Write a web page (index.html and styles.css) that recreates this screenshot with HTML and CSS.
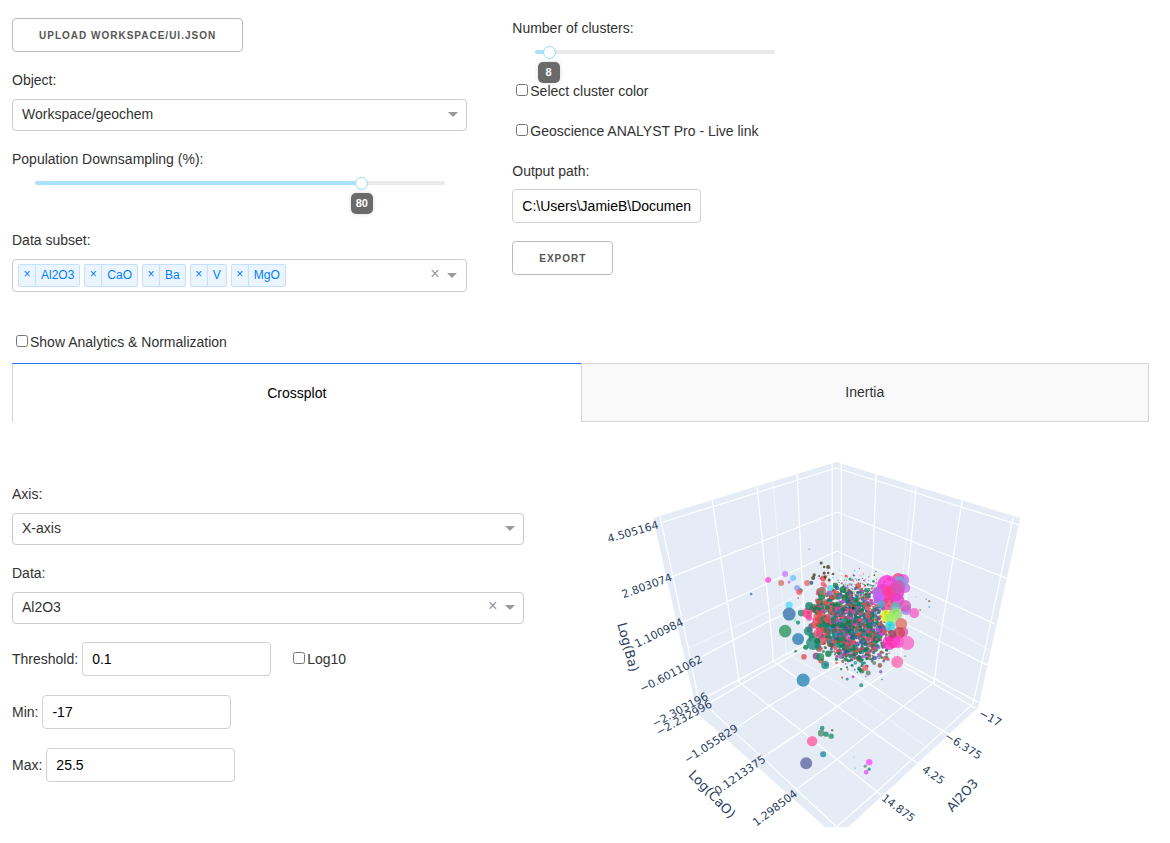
FILE: index.html
```html
<!DOCTYPE html>
<html lang="en">
<head>
<meta charset="utf-8">
<meta name="viewport" content="width=device-width, initial-scale=1">
<title>Scatter plot and clustering</title>
<link rel="stylesheet" href="styles.css">
</head>
<body>
<main class="page">
  <section class="setup">
    <div class="setup-left">
      <button class="button" type="button">Upload Workspace/ui.json</button>

      <div class="field">
        <label class="label" for="object">Object:</label>
        <div class="dropdown">
          <select id="object"><option>Workspace/geochem</option></select>
        </div>
      </div>

      <div class="field">
        <label class="label label-tight" for="downsampling">Population Downsampling (%):</label>
        <div class="slider slider-tall">
          <div class="slider-body">
            <span class="rail"></span>
            <span class="fill" style="width: 80%"></span>
            <input id="downsampling" type="range" min="0" max="100" value="80">
            <output class="tip" for="downsampling" style="left: 80%">80</output>
          </div>
        </div>
      </div>

      <div class="field-flush">
        <label class="label" for="subset">Data subset:</label>
        <div class="dropdown dropdown-multi">
          <span class="tag"><button type="button" aria-label="Remove Al2O3">×</button><span>Al2O3</span></span>
          <span class="tag"><button type="button" aria-label="Remove CaO">×</button><span>CaO</span></span>
          <span class="tag"><button type="button" aria-label="Remove Ba">×</button><span>Ba</span></span>
          <span class="tag"><button type="button" aria-label="Remove V">×</button><span>V</span></span>
          <span class="tag"><button type="button" aria-label="Remove MgO">×</button><span>MgO</span></span>
          <input id="subset" class="tag-input" type="text">
          <button class="clear" type="button" aria-label="Clear data subset">×</button>
        </div>
      </div>
    </div>

    <div class="setup-right">
      <label class="label label-tight" for="clusters">Number of clusters:</label>
      <div class="slider slider-short">
        <div class="slider-body">
          <span class="rail"></span>
          <span class="fill" style="width: 6%"></span>
          <input id="clusters" type="range" min="2" max="100" value="8">
          <output class="tip" for="clusters" style="left: 6%">8</output>
        </div>
      </div>
      <div class="options">
        <label class="check"><input type="checkbox">Select cluster color</label>
        <label class="check"><input type="checkbox">Geoscience ANALYST Pro - Live link</label>
        <div class="output-path">
          <label class="label" for="path">Output path:</label>
          <input id="path" class="text-input" type="text" value="C:\Users\JamieB\Documents\GIT">
        </div>
      </div>
      <button class="button" type="button">Export</button>
    </div>
  </section>

  <label class="check check-analytics"><input type="checkbox">Show Analytics &amp; Normalization</label>

  <div class="tabs" role="tablist">
    <button class="tab tab-selected" type="button" role="tab" aria-selected="true">Crossplot</button>
    <button class="tab" type="button" role="tab" aria-selected="false">Inertia</button>
  </div>

  <section class="crossplot">
    <div class="axis-form">
      <div class="field">
        <label class="label" for="axis">Axis:</label>
        <div class="dropdown">
          <select id="axis"><option>X-axis</option></select>
        </div>
      </div>
      <div class="field">
        <label class="label" for="data">Data:</label>
        <div class="dropdown">
          <select id="data"><option>Al2O3</option></select>
          <button class="clear" type="button" aria-label="Clear data">×</button>
        </div>
      </div>
      <div class="numbers">
        <div class="number-row">
          <label for="threshold">Threshold:</label>
          <input id="threshold" class="text-input" type="text" value="0.1">
          <label class="check check-log"><input type="checkbox">Log10</label>
        </div>
        <div class="number-row">
          <label for="min">Min:</label>
          <input id="min" class="text-input" type="text" value="-17">
        </div>
        <div class="number-row">
          <label for="max">Max:</label>
          <input id="max" class="text-input" type="text" value="25.5">
        </div>
      </div>
    </div>

    <svg class="plot" viewBox="524 440 625 387" role="img" aria-label="3D crossplot of Al2O3, Log(CaO) and Log(Ba)">
      <path class="walls" d="M653 518 836 462 1020 518 978 707 848 827H825L697 713Z"/>
      <g class="grid-faint">
        <path d="M773 482 785 637 786 653 847 688 930 750"/>
        <path d="M912 485 903 573 895 660 830 712 767 753"/>
        <path d="M688 648 767 612 837 572 918 612 990 650"/>
      </g>
      <g class="grid">
        <path d="M660 523 836 468 1019 525"/>
        <path d="M671 577 837 512 1006 578"/>
        <path d="M683 622 837 551 995 624"/>
        <path d="M693 661 767 622 837 590 987 665"/>
        <path d="M704 698 738 680 837 627 978 702"/>
        <path d="M660 517 688 647 698 698 767 762 836 826"/>
        <path d="M712 500 733 640 739 682 802 731 881 795"/>
        <path d="M757 487 772 643 773 661 837 706 872 731 917 763"/>
        <path d="M797 474 803 603 805 645 868 683 903 706 950 735"/>
        <path d="M832 463V628L910 670 975 708"/>
        <path d="M841 463V628L743 683 706 705"/>
        <path d="M876 474 872 577 870 645 820 675 770 705 737 727"/>
        <path d="M916 487 908 573 900 663 837 706 802 731 763 757"/>
        <path d="M962 500 953 557 946 602 939 642 934 682 903 706 872 731 837 759 795 790"/>
        <path d="M1013 517 985 648 973 703 943 731 912 759 877 791 837 826"/>
      </g>
      <g id="points" class="points"></g>
      <g class="ticks">
        <text transform="translate(633 532) rotate(-16)">4.505164</text>
        <text transform="translate(647 586) rotate(-20)">2.803074</text>
        <text transform="translate(659 633) rotate(-26)">1.100984</text>
        <text transform="translate(671 674) rotate(-27)">−0.6011062</text>
        <text transform="translate(680 710) rotate(-28)">−2.303196</text>
        <text transform="translate(684 718) rotate(-29)">−2.232996</text>
        <text transform="translate(711 744) rotate(-33)">−1.055829</text>
        <text transform="translate(740 775) rotate(-35)">0.1213375</text>
        <text transform="translate(775 808) rotate(-37)">1.298504</text>
        <text transform="translate(990 718) rotate(28)">−17</text>
        <text transform="translate(963 746) rotate(32)">−6.375</text>
        <text transform="translate(933 775) rotate(35)">4.25</text>
        <text transform="translate(898 808) rotate(37)">14.875</text>
      </g>
      <g class="axis-titles">
        <text transform="translate(628 647) rotate(75)">Log(Ba)</text>
        <text transform="translate(712 794) rotate(46)">Log(CaO)</text>
        <text transform="translate(962 795) rotate(-47)">Al2O3</text>
      </g>
    </svg>
  </section>
</main>
<script src="scatter.js"></script>
</body>
</html>
```

FILE: styles.css
```css
* {
  box-sizing: border-box;
}

body {
  margin: 0;
  background: #fff;
  color: #323232;
  font: 14px/24px "Liberation Sans", Arial, sans-serif;
}

button,
input,
select {
  font: inherit;
  color: inherit;
}

.page {
  padding: 16px 21px 16px 12px;
}

.setup {
  display: grid;
  grid-template-columns: 40% 25%;
  column-gap: 4%;
}

.setup-left {
  padding-top: 2px;
}

.button {
  height: 34px;
  padding: 1px 26px 0;
  border: 1px solid #bbb;
  border-radius: 4px;
  background: #fff;
  color: #555;
  font-size: 10px;
  font-weight: 700;
  letter-spacing: 1px;
  text-transform: uppercase;
  display: block;
}

.field {
  margin-top: 16px;
}

.label {
  display: block;
  margin-bottom: 7px;
}

.label-tight {
  margin-bottom: 0;
}

/* Dropdowns */
.dropdown {
  position: relative;
}

.dropdown::after {
  content: "";
  position: absolute;
  top: 13px;
  right: 9px;
  border: 5px solid transparent;
  border-top-color: #999;
  border-bottom-width: 0;
  pointer-events: none;
}

.dropdown select {
  display: block;
  width: 100%;
  height: 32px;
  padding: 0 52px 2px 9px;
  border: 1px solid #ccc;
  border-radius: 4px;
  background: #fff;
  color: #333;
  appearance: none;
}

.clear {
  position: absolute;
  top: 4px;
  right: 24px;
  width: 14px;
  padding: 0;
  border: 0;
  background: none;
  color: #999;
  font-size: 16px;
  line-height: 20px;
}

.dropdown-multi {
  display: flex;
  flex-wrap: wrap;
  gap: 4px;
  height: 33px;
  padding: 4px 52px 4px 5px;
  border: 1px solid #ccc;
  border-radius: 4px;
}

.tag {
  display: flex;
  height: 23px;
  border: 1px solid #c2e0ff;
  border-radius: 2px;
  background: #ebf5ff;
  color: #007eff;
  font-size: 12px;
  line-height: 20px;
}

.tag button {
  width: 17px;
  padding: 0 0 3px;
  border: 0;
  border-right: 1px solid #c2e0ff;
  background: none;
  line-height: 18px;
}

.tag span {
  padding: 0 5px;
}

.tag-input {
  flex: 1;
  width: 20px;
  min-width: 0;
  height: 23px;
  padding: 0;
  border: 0;
  outline: 0;
  background: none;
}

/* Sliders */
.slider {
  padding: 5px 22px 0 23px;
}

.slider-tall {
  height: 57px;
}

.slider-short {
  height: 39px;
}

.slider-body {
  position: relative;
  display: grid;
  align-items: center;
  height: 14px;
}

.rail,
.fill,
.slider-body input {
  grid-area: 1 / 1;
}

.rail,
.fill {
  height: 4px;
  border-radius: 6px;
  background: #e9e9e9;
}

.fill {
  background: #abe2fb;
}

.slider-body input {
  width: calc(100% + 12px);
  height: 14px;
  margin: 0 -6px 0 -7px;
  background: none;
  appearance: none;
  z-index: 1;
}

.slider-body input::-webkit-slider-thumb {
  width: 13px;
  height: 13px;
  border: 1px solid #96dbfa;
  border-radius: 50%;
  background: #fff;
  appearance: none;
}

.tip {
  position: absolute;
  top: 17px;
  min-width: 22px;
  height: 21px;
  margin-left: -1px;
  border-radius: 5px;
  background: #6a6a6a;
  box-shadow: 0 0 4px #d9d9d9;
  color: #fff;
  font-size: 11px;
  font-weight: 700;
  line-height: 21px;
  text-align: center;
  transform: translateX(-50%);
}

/* Check boxes and text boxes */
.check {
  display: flex;
  align-items: center;
}

.check input {
  width: 12px;
  height: 12px;
  margin: 0 2px 2px 4px;
}

.check-analytics {
  margin-top: 38px;
}

.options {
  display: grid;
  gap: 16px;
  margin-bottom: 18px;
}

.output-path .label {
  margin-bottom: 6px;
}

.text-input {
  display: block;
  width: 189px;
  height: 34px;
  padding: 6px 9px;
  border: 1px solid #d1d1d1;
  border-radius: 4px;
  background: #fff;
  color: #000;
}

/* Tabs */
.tabs {
  display: grid;
  grid-template-columns: 1fr 1fr;
  margin-top: 9px;
}

.tab {
  height: 59px;
  padding-bottom: 2px;
  border: 1px solid #d6d6d6;
  background: #f9f9f9;
}

.tab-selected {
  border-top-color: #1975fa;
  border-right: 0;
  border-bottom: 0;
  background: #fff;
  color: #000;
}

/* Crossplot */
.crossplot {
  display: grid;
  grid-template-columns: 45% 55%;
  align-items: start;
}

.axis-form {
  padding-top: 44px;
}

.numbers {
  display: grid;
  gap: 19px;
  margin-top: 18px;
}

.number-row {
  display: flex;
  align-items: center;
  gap: 4px;
}

.check-log {
  margin-left: 14px;
}

.plot {
  display: block;
  width: 100%;
  margin-top: 18px;
  overflow: visible;
}

.walls {
  fill: #e5ecf6;
}

.grid,
.grid-faint {
  fill: none;
  stroke: #fff;
  stroke-width: 1.2;
}

.grid-faint {
  opacity: 0.45;
}

.points {
  fill-opacity: 0.8;
}

.ticks,
.axis-titles {
  fill: #2a3f5f;
  font-family: "DejaVu Sans", Verdana, sans-serif;
  font-size: 11px;
  text-anchor: middle;
  dominant-baseline: central;
}

.axis-titles {
  font-size: 13px;
}
```

FILE: scatter.js
```js
const layer = document.getElementById("points");

function dot(x, y, r, color) {
  const c = document.createElementNS("http://www.w3.org/2000/svg", "circle");
  c.setAttribute("cx", x.toFixed(1));
  c.setAttribute("cy", y.toFixed(1));
  c.setAttribute("r", r.toFixed(1));
  c.setAttribute("fill", color);
  layer.appendChild(c);
}

/* Seeded generator, so the cloud is the same on every load */
let seed = 20220817;
function rand() {
  seed = (seed * 1664525 + 1013904223) % 4294967296;
  return seed / 4294967296;
}
function normal() {
  return rand() + rand() + rand() + rand() - 2;
}

function cloud(count, cx, cy, sx, sy, rMin, rMax, colors) {
  for (let i = 0; i < count; i++) {
    const x = cx + normal() * sx;
    const y = cy + normal() * sy;
    const r = rMin + (rMax - rMin) * rand() * rand();
    dot(x, y, r, colors[Math.floor(rand() * colors.length)]);
  }
}

const mixed = ["#14806c", "#0b8047", "#0b8047", "#148a7c", "#e0504c", "#e0504c", "#d8485a", "#3c7a50", "#206090", "#f03c9c", "#8a5cc0", "#9a5a48"];
const bright = ["#ff40d0", "#c060ff", "#30d0f0", "#d8e820", "#50e070", "#f05060", "#4090e0", "#403c18", "#0b8047"];

cloud(120, 857, 584, 24, 14, 0.4, 1, bright.concat("#403c18", "#403c18"));
cloud(190, 859, 594, 20, 12, 0.6, 1.8, bright.concat(mixed));

cloud(130, 830, 619, 19, 24, 2, 5, ["#14806c", "#0b8047", "#0b8047", "#178a84", "#e04858", "#e85850", "#f04890", "#8a5a78", "#4a8058"]);
cloud(450, 849, 622, 30, 31, 1, 4, mixed);
cloud(700, 860, 628, 23, 30, 0.8, 2.6, mixed.concat("#18789c", "#c040e0", "#20a0b0", "#0b8047"));
cloud(90, 859, 653, 20, 12, 1, 2.6, mixed);

const right = [
  [903,580,6,"#d860f8"],[898,579,6,"#f04080"],[905,588,5,"#d060f0"],[899,584,8,"#6eaee0"],
  [887,585,10,"#ff30d8"],[883,593,9,"#f040d0"],[877,592,5,"#b070e0"],[895,592,9,"#f038c0"],
  [889,593,7,"#ff3f90"],[898,587,7,"#d455b5"],[897,600,7,"#e040d0"],[879,598,6,"#c060ff"],
  [888,604,6,"#ff3c80"],[881,604,4,"#5ca0d0"],[906,610,5,"#a080f8"],[905,606,6,"#d956b8"],
  [895,607,5,"#60b8b8"],[886,616,6,"#e0f010"],[896,614,6,"#90e070"],[891,618,6,"#9cf060"],
  [890,626,5,"#30d8e8"],[903,632,5,"#f050c0"],[901,624,6,"#e07068"],[899,633,6,"#c84a58"],
  [881,631,5,"#c040f0"],[889,643,7,"#ff30c8"],[893,641,7,"#ff30a0"],[898,642,6,"#ff40d0"],
  [907,643,7,"#f868c4"],[897,662,6,"#ff66b0"],[914,613,5,"#fa5ec8"],[892,634,4,"#a04860"]
];
right.forEach(p => dot(...p));
cloud(60, 876, 626, 7, 24, 1, 3, mixed);

const outliers = [
  [768,580,3,"#ff4dd2"],[785,574,3,"#c77dff"],[793,578,3,"#6fc3ff"],[781,583,3,"#d4776c"],
  [789,582,1.5,"#e05cf0"],[807,583,3,"#e86d68"],[797,588,3,"#8c9cf0"],[799,592,3,"#f75c77"],
  [798,598,0.8,"#b0206a"],[751,594,1.3,"#2f939a"],[789,605,3.6,"#5bdcff"],[789,614,6.5,"#3a74ac"],
  [795,620,1.5,"#7df0b0"],[785,631,6.3,"#2f9660"],[798,639,6,"#2f7eb5"],[809,549,0.6,"#555"],
  [801,613,3.3,"#208c80"],[807,613,5,"#ff3c80"],[809,606,4,"#14806c"],[808,631,4.5,"#208c80"],
  [813,643,7,"#208c80"],[818,633,4.5,"#ff4880"],[817,641,3,"#0b8047"],[816,656,3.5,"#804a88"],
  [820,657,4,"#1f9064"],[825,665,4,"#208c80"],[822,591,4,"#a88070"],[823,584,2.5,"#f75c70"],
  [825,586,2,"#f75c70"],[830,588,3,"#50d8f0"],[803,680,6.5,"#2c86b4"],[812,741,5.2,"#ff5ca2"],
  [806,763,6,"#6068a6"],[823,754,3,"#208ca0"],[822,728,2.3,"#208c70"],[821,733,3.3,"#508c68"],
  [826,734,2.6,"#208c80"],[831,736,2.7,"#2c9468"],[832,730,1.2,"#6b6350"],[869,762,3.2,"#ff4cff"],
  [866,772,2.3,"#f050f0"],[865,766,1.6,"#5e9a70"],[869,769,1.6,"#208c90"],[854,757,0.7,"#40d8c0"],
  [855,768,0.7,"#40d8c0"],[868,673,2.5,"#5e8a6a"],[865,668,3,"#f0605c"],[861,685,2,"#208c80"],
  [847,679,1.4,"#208c80"],[841,669,1.2,"#0b8047"],[860,670,2,"#0b8047"],[874,663,2,"#5e8a6a"],
  [905,656,0.7,"#555"],[916,597,0.7,"#6ab0ff"],[929,601,1.2,"#888040"],[929,607,1,"#6ab0ff"],
  [926,599,0.6,"#555"],[920,610,1,"#a09030"],
  [821,563,1.5,"#403c18"],[824,567,1.3,"#403c18"],[828,567,2,"#403c18"],[824,573,1.6,"#403c18"],
  [828,573,1.3,"#403c18"],[825,577,1.7,"#403c18"],[814,575,1.7,"#403c18"],[813,578,2,"#403c18"],
  [819,576,1,"#403c18"],[833,574,1.2,"#403c18"],[829,580,1.5,"#403c18"],[853,608,1.5,"#202018"]
];
outliers.forEach(p => dot(...p));
```
